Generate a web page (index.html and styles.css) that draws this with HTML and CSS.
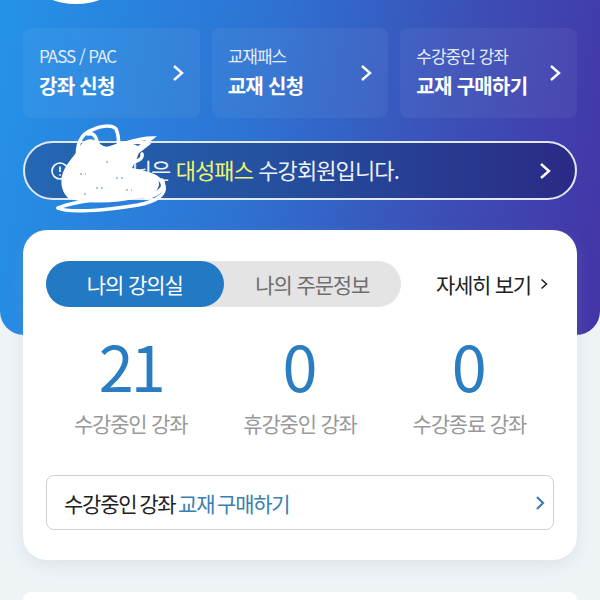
FILE: index.html
```html
<!DOCTYPE html>
<html lang="ko">
<head>
    <meta charset="UTF-8">
    <meta name="viewport" content="width=device-width, initial-scale=1.0">
    <title>나의 강의실</title>
    <link rel="stylesheet" href="styles.css">
</head>
<body>
    <div class="hero">
        <div class="avatar"></div>
        <div class="quick-row">
            <a class="quick-card">
                <span class="quick-text">
                    <span class="quick-sub">PASS / PAC</span>
                    <strong class="quick-title">강좌 신청</strong>
                </span>
                <svg class="chev" viewBox="0 0 12 18"><path d="M2 2l8 7-8 7"/></svg>
            </a>
            <a class="quick-card">
                <span class="quick-text">
                    <span class="quick-sub">교재패스</span>
                    <strong class="quick-title">교재 신청</strong>
                </span>
                <svg class="chev" viewBox="0 0 12 18"><path d="M2 2l8 7-8 7"/></svg>
            </a>
            <a class="quick-card">
                <span class="quick-text">
                    <span class="quick-sub">수강중인 강좌</span>
                    <strong class="quick-title">교재 구매하기</strong>
                </span>
                <svg class="chev" viewBox="0 0 12 18"><path d="M2 2l8 7-8 7"/></svg>
            </a>
        </div>
        <div class="notice">
            <svg class="notice-icon" viewBox="0 0 18 18"><circle cx="9" cy="9" r="8"/><path d="M9 4.5v5.5M9 12.2v1.6"/></svg>
            <span class="notice-text">회원님은 <em>대성패스</em> 수강회원입니다.</span>
            <svg class="chev" viewBox="0 0 12 18"><path d="M2 2l8 7-8 7"/></svg>
        </div>
        <!-- scribble over the member name -->
        <svg class="scribble" viewBox="0 0 120 92">
            <path class="scribble-fill" d="M24 26C28 16 36 12 44 18C50 24 56 24 62 20C72 18 84 20 86 24C84 34 80 40 78 44C88 46 100 50 104 56C108 64 100 72 84 74C60 80 30 80 14 74C6 66 6 54 10 46C14 38 20 32 24 26Z"/>
            <path class="scribble-line" d="M24 36C22 22 26 10 38 6C48 1 58 1 62 5C66 14 65 26 60 32"/>
            <path class="scribble-line" d="M34 10C40 8 44 14 44 26"/>
            <path class="scribble-line" d="M40 30C62 22 84 14 98 14C88 22 72 32 54 40"/>
            <path class="scribble-line" d="M50 26C66 20 84 16 94 20C84 28 76 34 66 40"/>
            <path class="scribble-line" d="M60 42C76 38 90 38 88 30"/>
            <path class="scribble-line" d="M66 46C84 46 100 50 106 56C112 62 108 70 92 74"/>
            <path class="scribble-line" d="M4 84C22 76 60 74 92 72C108 68 112 62 108 56"/>
            <path class="scribble-line" d="M4 84C14 89 48 87 84 81C104 77 112 70 110 62"/>
            <path class="scribble-speck" d="M26 50h6M42 64h8M62 54h7M30 70h5M72 66h6M52 38h5"/>
        </svg>
    </div>

    <div class="main-card">
        <div class="tab-row">
            <div class="tabs">
                <span class="tab tab-active">나의 강의실</span>
                <span class="tab">나의 주문정보</span>
            </div>
            <a class="more">자세히 보기
                <svg class="more-chev" viewBox="0 0 8 12"><path d="M1.5 1.5L6.5 6l-5 4.5"/></svg>
            </a>
        </div>
        <div class="stats">
            <div class="stat">
                <div class="stat-num stat-num-wide">21</div>
                <div class="stat-label">수강중인 강좌</div>
            </div>
            <div class="stat">
                <div class="stat-num">0</div>
                <div class="stat-label">휴강중인 강좌</div>
            </div>
            <div class="stat">
                <div class="stat-num">0</div>
                <div class="stat-label">수강종료 강좌</div>
            </div>
        </div>
        <a class="buy-link">
            <span>수강중인 강좌 <em>교재 구매하기</em></span>
            <svg class="buy-chev" viewBox="0 0 10 16"><path d="M2 2l6 6-6 6"/></svg>
        </a>
    </div>

    <div class="next-card"></div>
</body>
</html>
```

FILE: styles.css
```css
body {
    margin: 0;
    height: 600px;
    overflow: hidden;
    background-color: #eef3f6;
    font-family: "Noto Sans CJK KR", "Noto Sans", sans-serif;
}
em {
    font-style: normal;
}
.hero {
    position: relative;
    height: 335px;
    box-sizing: border-box;
    padding: 0 23px;
    border-radius: 0 0 24px 24px;
    background: linear-gradient(100deg, #2493e8 0%, #2e72d2 42%, #3c4fb7 72%, #4434a6 100%);
    overflow: hidden;
}
.avatar {
    width: 142px;
    height: 142px;
    margin: -138px 0 0 -18px;
    border-radius: 50%;
    background: #fff;
}
.quick-row {
    display: flex;
    gap: 12px;
    margin-top: 24px;
}
.quick-card {
    flex: 1;
    height: 90px;
    box-sizing: border-box;
    padding: 0 16px;
    display: flex;
    align-items: center;
    justify-content: space-between;
    border-radius: 8px;
    background: rgba(255, 255, 255, 0.05);
    color: #fff;
}
.quick-text {
    display: flex;
    flex-direction: column;
}
.quick-sub {
    font-size: 17px;
    line-height: 26px;
    letter-spacing: -1px;
    color: #e4ecfa;
}
.quick-title {
    font-size: 20px;
    line-height: 34px;
    font-weight: 700;
    letter-spacing: -0.7px;
}
.chev {
    width: 12px;
    height: 18px;
    flex: none;
    fill: none;
    stroke: #fff;
    stroke-width: 2.4;
}
.notice {
    display: flex;
    align-items: center;
    height: 59px;
    box-sizing: border-box;
    margin-top: 23px;
    padding: 0 24px 0 26px;
    border: 2px solid #e2e9f6;
    border-radius: 30px;
    background: linear-gradient(90deg, #2468b4 0%, #24509f 45%, #2b2a86 100%);
}
.notice-icon {
    width: 18px;
    height: 18px;
    flex: none;
    fill: none;
    stroke: #fff;
    stroke-width: 1.6;
}
.notice-text {
    flex: 1;
    margin-left: 24px;
    padding-bottom: 3px;
    font-size: 22px;
    letter-spacing: -0.9px;
    color: #eef2fb;
}
.notice-text em {
    color: #f2f56a;
}
.scribble {
    position: absolute;
    left: 54px;
    top: 124px;
    width: 120px;
    height: 92px;
}
.scribble-fill {
    fill: #fff;
}
.scribble-line {
    fill: none;
    stroke: #fff;
    stroke-width: 3.5;
    stroke-linecap: round;
}
.scribble-speck {
    fill: none;
    stroke: #5f86c4;
    stroke-width: 1;
    stroke-dasharray: 2 3;
}
.main-card {
    position: relative;
    height: 330px;
    box-sizing: border-box;
    margin: -105px 23px 0;
    padding: 31px 23px 0;
    border-radius: 24px;
    background: #fff;
    box-shadow: 0 6px 16px rgba(150, 170, 190, 0.18);
}
.tab-row {
    display: flex;
    align-items: center;
}
.tabs {
    display: flex;
    width: 355px;
    height: 46px;
    border-radius: 23px;
    background: #e4e4e4;
}
.tab {
    flex: 1;
    display: flex;
    align-items: center;
    justify-content: center;
    border-radius: 23px;
    font-size: 21px;
    letter-spacing: -1.1px;
    color: #6f6f6f;
}
.tab-active {
    background: #2279c4;
    color: #fff;
}
.more {
    display: flex;
    align-items: center;
    margin-left: 35px;
    font-size: 21px;
    letter-spacing: -1.3px;
    color: #222;
    white-space: nowrap;
}
.more-chev {
    width: 8px;
    height: 12px;
    margin-left: 9px;
    fill: none;
    stroke: #222;
    stroke-width: 1.6;
}
.stats {
    display: flex;
    margin-top: 18px;
}
.stat {
    flex: 1;
    text-align: center;
}
.stat-num {
    height: 80px;
    font-size: 63px;
    line-height: 80px;
    color: #2a7dc0;
}
.stat-num-wide {
    letter-spacing: -3px;
}
.stat-label {
    margin-top: 3px;
    font-size: 21px;
    line-height: 30px;
    letter-spacing: -1.2px;
    color: #999;
}
.buy-link {
    display: flex;
    align-items: center;
    justify-content: space-between;
    height: 55px;
    box-sizing: border-box;
    margin-top: 37px;
    padding: 0 8px 0 17px;
    border: 1.5px solid #d2d2d2;
    border-radius: 8px;
    font-size: 21px;
    letter-spacing: -1.2px;
    word-spacing: -2px;
    color: #222;
}
.buy-link em {
    color: #3a7fb0;
}
.buy-chev {
    width: 10px;
    height: 16px;
    fill: none;
    stroke: #3a7fb0;
    stroke-width: 2.2;
}
.next-card {
    height: 8px;
    margin: 32px 23px 0;
    border-radius: 24px 24px 0 0;
    background: #fff;
}
```
